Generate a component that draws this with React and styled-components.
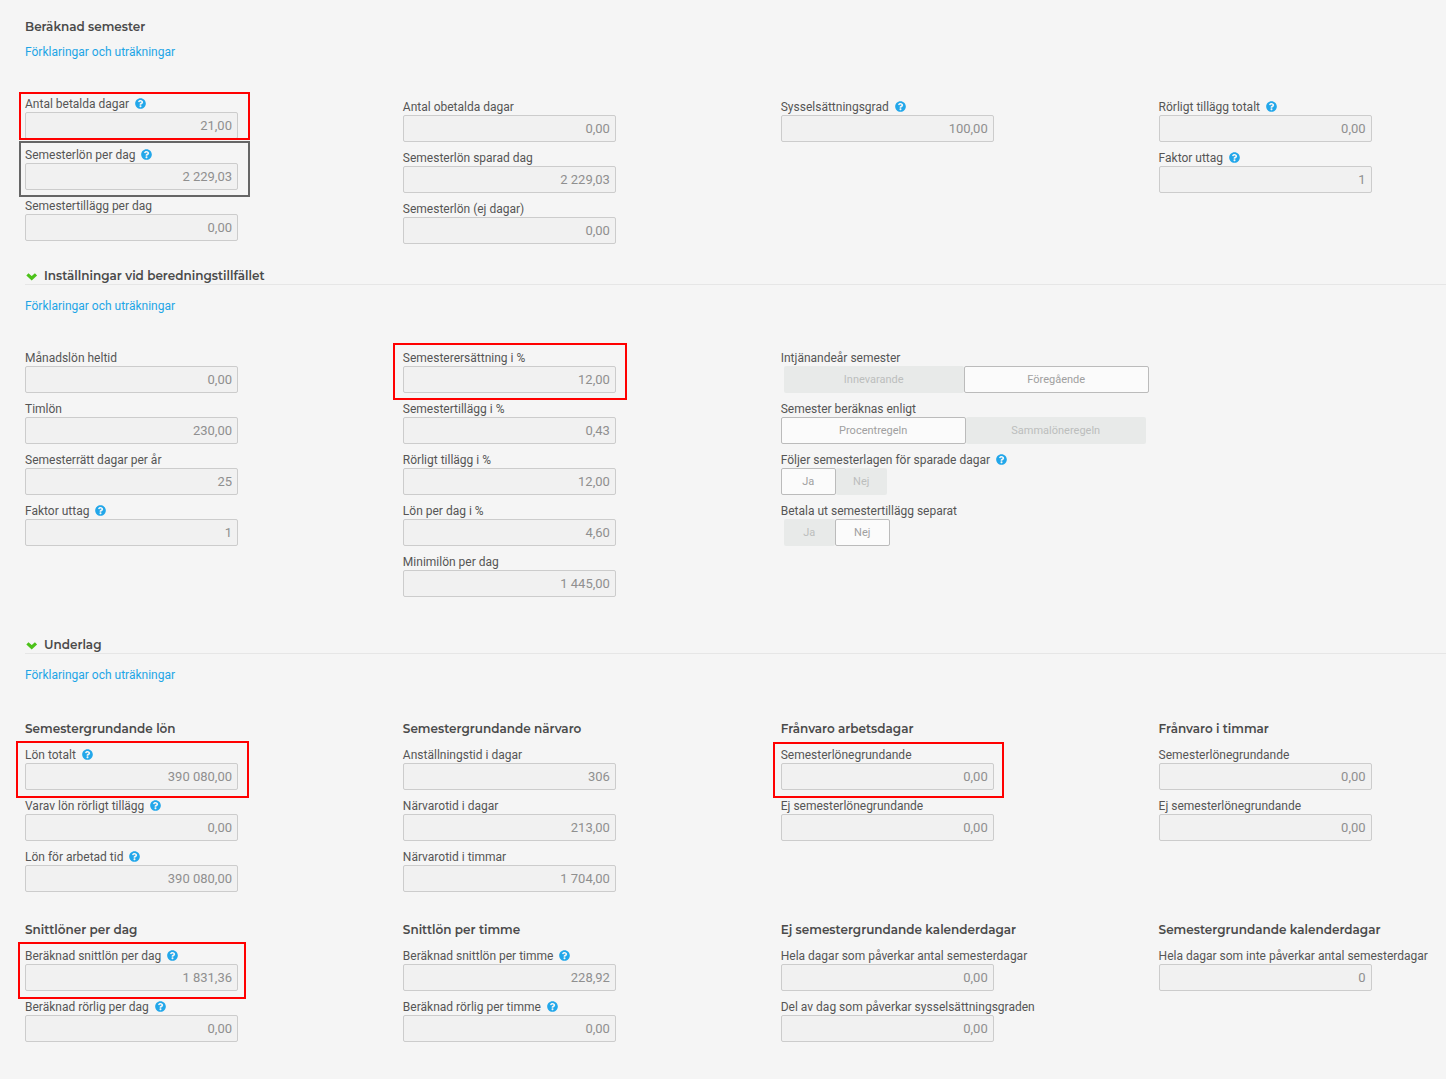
import React, { useId } from "react";
import styled, { createGlobalStyle } from "styled-components";
import { FaQuestionCircle } from "react-icons/fa";

const RED = "#ff0000";
const GREY = "#666666";

const calculated = [
  {
    fields: [
      { label: "Antal betalda dagar", value: "21,00", help: true, mark: { top: -3, left: -6, width: 231, height: 48, color: RED } },
      { label: "Semesterlön per dag", value: "2 229,03", help: true, mark: { top: -5, left: -6, width: 231, height: 56, color: GREY } },
      { label: "Semestertillägg per dag", value: "0,00" },
    ],
  },
  {
    lowered: true,
    fields: [
      { label: "Antal obetalda dagar", value: "0,00" },
      { label: "Semesterlön sparad dag", value: "2 229,03" },
      { label: "Semesterlön (ej dagar)", value: "0,00" },
    ],
  },
  {
    lowered: true,
    fields: [{ label: "Sysselsättningsgrad", value: "100,00", help: true }],
  },
  {
    lowered: true,
    fields: [
      { label: "Rörligt tillägg totalt", value: "0,00", help: true },
      { label: "Faktor uttag", value: "1", help: true },
    ],
  },
];

const settings = [
  {
    fields: [
      { label: "Månadslön heltid", value: "0,00" },
      { label: "Timlön", value: "230,00" },
      { label: "Semesterrätt dagar per år", value: "25" },
      { label: "Faktor uttag", value: "1", help: true },
    ],
  },
  {
    fields: [
      { label: "Semesterersättning i %", value: "12,00", mark: { top: -6, left: -10, width: 234, height: 57, color: RED } },
      { label: "Semestertillägg i %", value: "0,43" },
      { label: "Rörligt tillägg i %", value: "12,00" },
      { label: "Lön per dag i %", value: "4,60" },
      { label: "Minimilön per dag", value: "1 445,00" },
    ],
  },
  {
    fields: [
      { label: "Intjänandeår semester", options: ["Innevarande", "Föregående"], selected: 1, wide: true },
      { label: "Semester beräknas enligt", options: ["Procentregeln", "Sammalöneregeln"], selected: 0, wide: true },
      { label: "Följer semesterlagen för sparade dagar", options: ["Ja", "Nej"], selected: 0, help: true },
      { label: "Betala ut semestertillägg separat", options: ["Ja", "Nej"], selected: 1 },
    ],
  },
];

const basis = [
  {
    title: "Semestergrundande lön",
    fields: [
      { label: "Lön totalt", value: "390 080,00", help: true, mark: { top: -5, left: -9, width: 233, height: 57, color: RED } },
      { label: "Varav lön rörligt tillägg", value: "0,00", help: true },
      { label: "Lön för arbetad tid", value: "390 080,00", help: true },
    ],
  },
  {
    title: "Semestergrundande närvaro",
    fields: [
      { label: "Anställningstid i dagar", value: "306" },
      { label: "Närvarotid i dagar", value: "213,00" },
      { label: "Närvarotid i timmar", value: "1 704,00" },
    ],
  },
  {
    title: "Frånvaro arbetsdagar",
    fields: [
      { label: "Semesterlönegrundande", value: "0,00", mark: { top: -4, left: -8, width: 231, height: 56, color: RED } },
      { label: "Ej semesterlönegrundande", value: "0,00" },
    ],
  },
  {
    title: "Frånvaro i timmar",
    fields: [
      { label: "Semesterlönegrundande", value: "0,00" },
      { label: "Ej semesterlönegrundande", value: "0,00" },
    ],
  },
  {
    title: "Snittlöner per dag",
    fields: [
      { label: "Beräknad snittlön per dag", value: "1 831,36", help: true, mark: { top: -5, left: -7, width: 228, height: 57, color: RED } },
      { label: "Beräknad rörlig per dag", value: "0,00", help: true },
    ],
  },
  {
    title: "Snittlön per timme",
    fields: [
      { label: "Beräknad snittlön per timme", value: "228,92", help: true },
      { label: "Beräknad rörlig per timme", value: "0,00", help: true },
    ],
  },
  {
    title: "Ej semestergrundande kalenderdagar",
    fields: [
      { label: "Hela dagar som påverkar antal semesterdagar", value: "0,00" },
      { label: "Del av dag som påverkar sysselsättningsgraden", value: "0,00" },
    ],
  },
  {
    title: "Semestergrundande kalenderdagar",
    fields: [{ label: "Hela dagar som inte påverkar antal semesterdagar", value: "0" }],
  },
];

function Chevron() {
  return (
    <svg width="13" height="12" viewBox="0 0 13 12" aria-hidden="true">
      <path d="M2.4 4.4 L6.7 8.3 L11 4.4" fill="none" stroke="currentColor" strokeWidth="3.2" />
    </svg>
  );
}

function Help() {
  return (
    <HelpButton type="button" aria-label="Hjälp">
      <FaQuestionCircle size={11} />
    </HelpButton>
  );
}

function ValueField({ label, value, help, mark }) {
  const id = useId();
  return (
    <FieldWrap>
      <LabelRow>
        <label htmlFor={id}>{label}</label>
        {help && <Help />}
      </LabelRow>
      <ValueInput id={id} type="text" value={value} disabled readOnly />
      {mark && <Mark $mark={mark} />}
    </FieldWrap>
  );
}

function ToggleField({ label, options, selected, wide, help }) {
  const id = useId();
  return (
    <FieldWrap>
      <LabelRow>
        <span id={id}>{label}</span>
        {help && <Help />}
      </LabelRow>
      <ToggleGroup role="radiogroup" aria-labelledby={id}>
        {options.map((option, i) => (
          <ToggleOption key={option} $on={i === selected} $wide={wide}>
            <HiddenRadio type="radio" name={id} checked={i === selected} disabled readOnly />
            {option}
          </ToggleOption>
        ))}
      </ToggleGroup>
    </FieldWrap>
  );
}

function Columns({ groups }) {
  return (
    <Grid>
      {groups.map((group, i) => (
        <Column key={i} $lowered={group.lowered}>
          {group.title && <ColumnTitle>{group.title}</ColumnTitle>}
          {group.fields.map((field) =>
            field.options ? (
              <ToggleField key={field.label} {...field} />
            ) : (
              <ValueField key={field.label} {...field} />
            )
          )}
        </Column>
      ))}
    </Grid>
  );
}

function App() {
  return (
    <>
      <GlobalStyle />
      <Page>
        <section>
          <Title>Beräknad semester</Title>
          <ExplainLink href="#berakning">Förklaringar och uträkningar</ExplainLink>
          <Columns groups={calculated} />
        </section>
        <section>
          <FoldTitle>
            <FoldButton type="button" aria-expanded="true">
              <Chevron />
              Inställningar vid beredningstillfället
            </FoldButton>
          </FoldTitle>
          <ExplainLink href="#installningar">Förklaringar och uträkningar</ExplainLink>
          <Columns groups={settings} />
        </section>
        <Underlag>
          <FoldTitle>
            <FoldButton type="button" aria-expanded="true">
              <Chevron />
              Underlag
            </FoldButton>
          </FoldTitle>
          <ExplainLink href="#underlag">Förklaringar och uträkningar</ExplainLink>
          <Columns groups={basis} />
        </Underlag>
      </Page>
    </>
  );
}

const GlobalStyle = createGlobalStyle`
  * {
    box-sizing: border-box;
  }
  body {
    margin: 0;
    background: #f5f5f5;
    color: #555555;
    font-family: Roboto, "Liberation Sans", sans-serif;
    font-size: 12px;
  }
`;

const Page = styled.main`
  padding: 18px 0 20px 25px;
`;

const Title = styled.h2`
  margin: 0 0 7px;
  font-family: Montserrat, Inter, sans-serif;
  font-size: 12px;
  line-height: 18px;
  font-weight: 600;
  color: #4a4a4a;
`;

const FoldTitle = styled(Title)`
  padding-top: 2px;
  border-bottom: 1px solid #e6e6e6;
  margin-bottom: 12px;
  line-height: 16px;
`;

const FoldButton = styled.button`
  display: flex;
  align-items: center;
  gap: 6px;
  padding: 0;
  border: none;
  background: none;
  font: inherit;
  color: inherit;
  cursor: pointer;
  svg {
    color: #4cc21a;
  }
`;

const ExplainLink = styled.a`
  display: block;
  width: fit-content;
  line-height: 18px;
  color: #1ea5e6;
  text-decoration: none;
`;

const Grid = styled.div`
  display: grid;
  grid-template-columns: 4fr 4fr 4fr 3fr;
  row-gap: 27px;
  padding: 34px 4px 22px 0;
`;

const Underlag = styled.section`
  margin-top: 16px;
`;

const Column = styled.div`
  display: flex;
  flex-direction: column;
  gap: 7px;
  min-width: 0;
  margin-top: ${(props) => (props.$lowered ? "3px" : "0")};
`;

const ColumnTitle = styled.h3`
  margin: 0;
  padding-top: 1px;
  font-family: Montserrat, Inter, sans-serif;
  font-size: 12px;
  line-height: 20px;
  font-weight: 600;
  color: #4a4a4a;
`;

const FieldWrap = styled.div`
  position: relative;
`;

const LabelRow = styled.div`
  display: flex;
  align-items: center;
  gap: 6px;
  height: 17px;
  padding-top: 2px;
  line-height: 15px;
  white-space: nowrap;
`;

const HelpButton = styled.button`
  display: flex;
  padding: 0 0 2px;
  border: none;
  background: none;
  color: #22a7ea;
  cursor: pointer;
`;

const ValueInput = styled.input`
  display: block;
  width: 213px;
  height: 27px;
  padding: 0 5px;
  border: 1px solid #cccccc;
  border-radius: 2px;
  background: #f1f1f1;
  color: #8f8f8f;
  font-family: inherit;
  font-size: 13px;
  text-align: right;
`;

const ToggleGroup = styled.div`
  display: flex;
`;

const ToggleOption = styled.label`
  display: flex;
  align-items: center;
  justify-content: center;
  width: ${(props) => (props.$wide ? (props.$on ? 185 : 180) : props.$on ? 55 : 51)}px;
  height: 27px;
  border: ${(props) => (props.$on ? "1px solid #bbbbbb" : "none")};
  border-radius: 2px;
  background: ${(props) => (props.$on ? "#fbfbfb" : "#e8eae9")};
  color: ${(props) => (props.$on ? "#a0a0a0" : "#bcbebd")};
  font-size: 11px;
  &:first-child {
    margin-left: ${(props) => (props.$on ? "0" : "3px")};
  }
`;

const HiddenRadio = styled.input`
  position: absolute;
  width: 1px;
  height: 1px;
  margin: 0;
  opacity: 0;
`;

const Mark = styled.div`
  position: absolute;
  top: ${(props) => props.$mark.top}px;
  left: ${(props) => props.$mark.left}px;
  width: ${(props) => props.$mark.width}px;
  height: ${(props) => props.$mark.height}px;
  border: 2px solid ${(props) => props.$mark.color};
  pointer-events: none;
`;

export default App;
